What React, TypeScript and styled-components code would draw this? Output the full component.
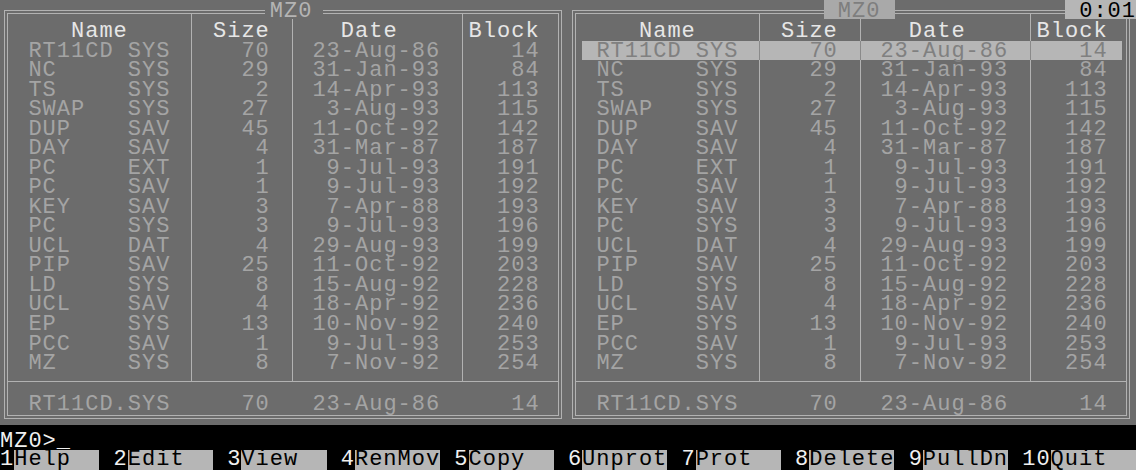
import React from 'react';
import styled, { createGlobalStyle, css } from 'styled-components';

const CW = 14.2;
const RH = 19.54;

const C = {
  panel: '#6c6c6c',
  line: '#b2b2b2',
  text: '#a4a4a4',
  head: '#e6e6e6',
  hlBg: '#b6b6b6',
  hlText: '#808080',
  hlSep: '#8a8a8a',
  keyBg: '#b6b6b6',
  white: '#f0f0f0',
};

type FileEntry = { name: string; ext: string; size: number; date: string; block: number };

const FILES: FileEntry[] = [
  { name: 'RT11CD', ext: 'SYS', size: 70, date: '23-Aug-86', block: 14 },
  { name: 'NC', ext: 'SYS', size: 29, date: '31-Jan-93', block: 84 },
  { name: 'TS', ext: 'SYS', size: 2, date: '14-Apr-93', block: 113 },
  { name: 'SWAP', ext: 'SYS', size: 27, date: '3-Aug-93', block: 115 },
  { name: 'DUP', ext: 'SAV', size: 45, date: '11-Oct-92', block: 142 },
  { name: 'DAY', ext: 'SAV', size: 4, date: '31-Mar-87', block: 187 },
  { name: 'PC', ext: 'EXT', size: 1, date: '9-Jul-93', block: 191 },
  { name: 'PC', ext: 'SAV', size: 1, date: '9-Jul-93', block: 192 },
  { name: 'KEY', ext: 'SAV', size: 3, date: '7-Apr-88', block: 193 },
  { name: 'PC', ext: 'SYS', size: 3, date: '9-Jul-93', block: 196 },
  { name: 'UCL', ext: 'DAT', size: 4, date: '29-Aug-93', block: 199 },
  { name: 'PIP', ext: 'SAV', size: 25, date: '11-Oct-92', block: 203 },
  { name: 'LD', ext: 'SYS', size: 8, date: '15-Aug-92', block: 228 },
  { name: 'UCL', ext: 'SAV', size: 4, date: '18-Apr-92', block: 236 },
  { name: 'EP', ext: 'SYS', size: 13, date: '10-Nov-92', block: 240 },
  { name: 'PCC', ext: 'SAV', size: 1, date: '9-Jul-93', block: 253 },
  { name: 'MZ', ext: 'SYS', size: 8, date: '7-Nov-92', block: 254 },
];

const KEYS = [
  ['1', 'Help'],
  ['2', 'Edit'],
  ['3', 'View'],
  ['4', 'RenMov'],
  ['5', 'Copy'],
  ['6', 'Unprot'],
  ['7', 'Prot'],
  ['8', 'Delete'],
  ['9', 'PullDn'],
  ['10', 'Quit'],
];

const GlobalStyle = createGlobalStyle`
  html, body { margin: 0; padding: 0; background: #000; }
  body { width: 1136px; height: 470px; overflow: hidden; }
`;

const Screen = styled.div`
  width: 1136px;
  height: 470px;
  background: #000;
  display: flex;
  flex-direction: column;
  font-family: "Liberation Mono", "DejaVu Sans Mono", monospace;
  font-size: 22px;
  letter-spacing: ${CW - 13.202}px;
  line-height: ${RH}px;
  white-space: pre;
  overflow: hidden;
`;

const PanelsArea = styled.div`
  flex: none;
  display: flex;
  height: 425px;
  background: ${C.panel};
`;

const Panel = styled.section`
  position: relative;
  flex: none;
  width: 568px;
  box-sizing: border-box;
  padding: 10px 0 0 4px;
`;

const OuterBox = styled.div`
  width: 558px;
  height: 409px;
  box-sizing: border-box;
  border: 1px solid ${C.line};
  padding: 2px;
`;

const InnerBox = styled.div`
  height: 100%;
  box-sizing: border-box;
  border: 1px solid ${C.line};
  display: flex;
  flex-direction: column;
`;

const ListArea = styled.div`
  flex: none;
  display: flex;
  height: 367px;
`;

const Column = styled.div<{ $w: number; $pl?: number; $pr?: number; $last?: boolean }>`
  flex: none;
  width: ${(p) => p.$w}px;
  box-sizing: border-box;
  padding: 7px ${(p) => p.$pr ?? 0}px 0 ${(p) => p.$pl ?? 0}px;
  border-right: ${(p) => (p.$last ? 'none' : `1px solid ${C.line}`)};
`;

const HeadCell = styled.div<{ $pl: number }>`
  height: ${RH}px;
  box-sizing: border-box;
  padding: 1px 0 0 ${(p) => p.$pl}px;
  color: ${C.head};
`;

const Cell = styled.div<{ $pl: number; $hl?: boolean; $sep?: boolean }>`
  height: ${RH}px;
  box-sizing: border-box;
  padding: 1px 0 0 ${(p) => p.$pl}px;
  color: ${C.text};
  ${(p) =>
    p.$hl &&
    css`
      background: ${C.hlBg};
      color: ${C.hlText};
    `}
  ${(p) =>
    p.$hl &&
    p.$sep &&
    css`
      margin-right: -1px;
      border-right: 1px solid ${C.hlSep};
    `}
`;

const StatusBar = styled.div`
  flex: 1;
  border-top: 1px solid ${C.line};
  padding: 13px 0 0 20.4px;
  color: ${C.text};
`;

const Title = styled.div<{ $active?: boolean }>`
  position: absolute;
  top: 0;
  height: 18.5px;
  padding-top: 2px;
  box-sizing: border-box;
  ${(p) =>
    p.$active
      ? css`
          left: ${18 * CW}px;
          width: ${5 * CW}px;
          background: #a9a9a9;
          color: #7e7e7e;
        `
      : css`
          left: 265px;
          width: 58px;
          padding-left: ${19 * CW - 265}px;
          background: ${C.panel};
          color: #b4b4b4;
        `}
`;

const Clock = styled.div`
  position: absolute;
  top: 0;
  right: 0;
  width: ${5 * CW}px;
  height: 18.5px;
  padding-top: 2px;
  box-sizing: border-box;
  background: ${C.keyBg};
  color: #000;
`;

const Prompt = styled.div`
  flex: none;
  margin-top: 5px;
  height: ${RH}px;
  box-sizing: border-box;
  padding-top: 2px;
  color: ${C.white};
`;

const KeyBar = styled.div`
  flex: none;
  display: flex;
  height: 20px;
  line-height: 18px;
`;

const Key = styled.div<{ $last?: boolean }>`
  display: flex;
  margin-right: ${(p) => (p.$last ? 0 : CW)}px;
`;

const KeyNum = styled.span`
  color: ${C.white};
  padding-top: 1px;
`;

const KeyLabel = styled.span`
  width: ${6 * CW}px;
  background: ${C.keyBg};
  color: #000;
  padding-top: 1px;
`;

const pad = (s: string | number, n: number) => String(s).padStart(n, ' ');

const FilePanel: React.FC<{ active?: boolean }> = ({ active }) => (
  <Panel>
    <OuterBox>
      <InnerBox>
        <ListArea>
          <Column $w={184} $pl={6}>
            <HeadCell $pl={14.4 + 3 * CW}>Name</HeadCell>
            {FILES.map((f, i) => (
              <Cell key={i} $pl={14.4} $hl={active && i === 0} $sep>
                {f.name.padEnd(7, ' ') + f.ext}
              </Cell>
            ))}
          </Column>
          <Column $w={101}>
            <HeadCell $pl={6.8}>{' Size'}</HeadCell>
            {FILES.map((f, i) => (
              <Cell key={i} $pl={6.8} $hl={active && i === 0} $sep>
                {pad(f.size, 5)}
              </Cell>
            ))}
          </Column>
          <Column $w={170}>
            <HeadCell $pl={5.2}>{'   Date'}</HeadCell>
            {FILES.map((f, i) => (
              <Cell key={i} $pl={5.2} $hl={active && i === 0} $sep>
                {pad(f.date, 10)}
              </Cell>
            ))}
          </Column>
          <Column $w={95} $pr={4} $last>
            <HeadCell $pl={5.6}>Block</HeadCell>
            {FILES.map((f, i) => (
              <Cell key={i} $pl={5.6} $hl={active && i === 0}>
                {pad(f.block, 5)}
              </Cell>
            ))}
          </Column>
        </ListArea>
        <StatusBar>{'RT11CD.SYS     70   23-Aug-86     14'}</StatusBar>
      </InnerBox>
    </OuterBox>
    <Title $active={active}>{active ? ' MZ0 ' : 'MZ0'}</Title>
    {active && <Clock>{' 0:01'}</Clock>}
  </Panel>
);

export default function App() {
  return (
    <>
      <GlobalStyle />
      <Screen>
        <PanelsArea>
          <FilePanel />
          <FilePanel active />
        </PanelsArea>
        <Prompt>MZ0&gt;_</Prompt>
        <KeyBar>
          {KEYS.map(([n, l], i) => (
            <Key key={n} $last={i === KEYS.length - 1}>
              <KeyNum>{n}</KeyNum>
              <KeyLabel>{l}</KeyLabel>
            </Key>
          ))}
        </KeyBar>
      </Screen>
    </>
  );
}
